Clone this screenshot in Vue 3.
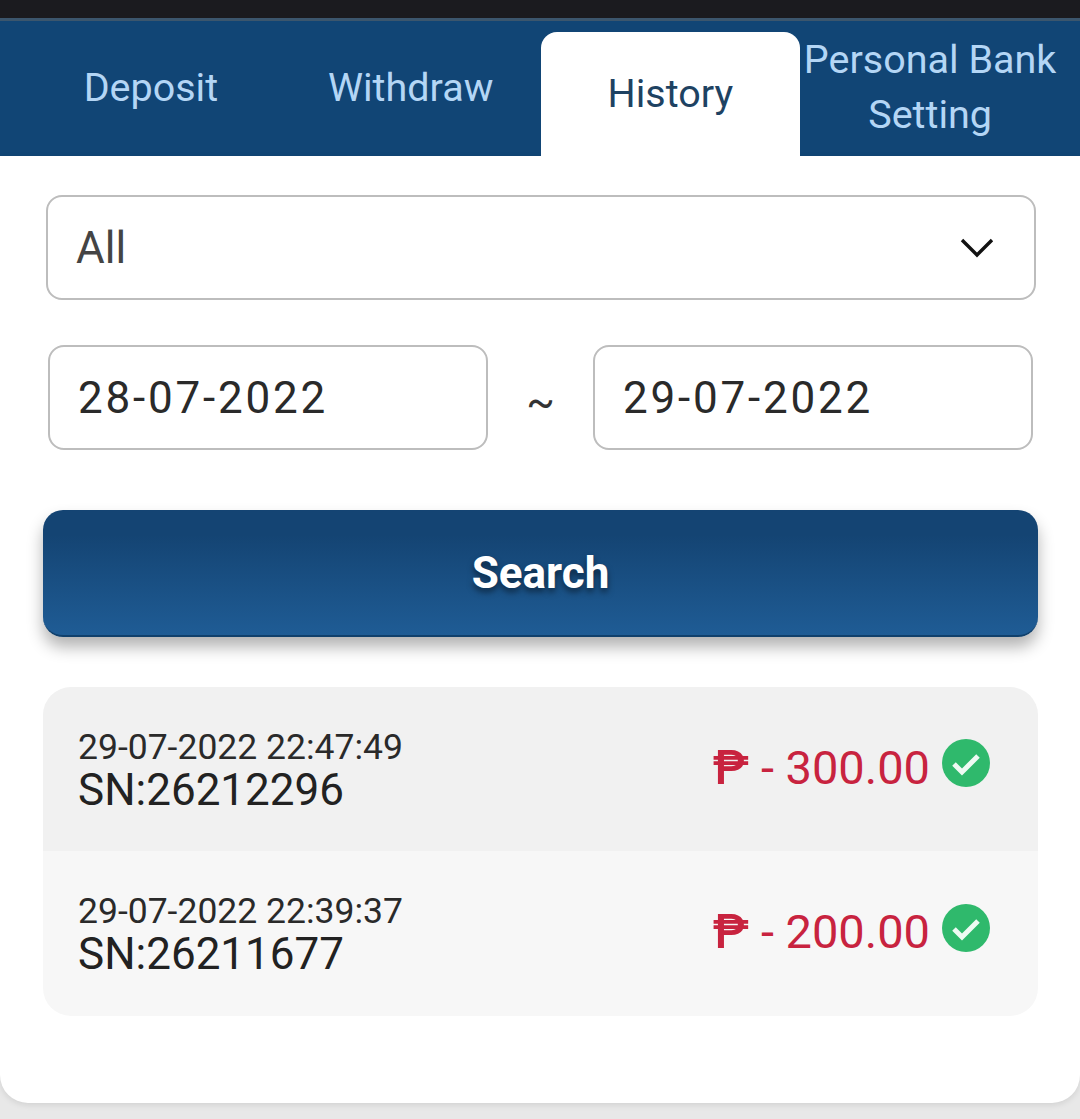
<template>
  <div class="page">
    <div class="status-bar"></div>
    <div class="tabs">
      <div v-for="tab in tabs" :key="tab" class="tab" :class="{ active: tab === activeTab }">
        {{ tab }}
      </div>
    </div>

    <div class="panel">
      <div class="select">
        <span>All</span>
        <svg class="chevron" width="36" height="24" viewBox="0 0 36 24">
          <path d="M3 4 L18 19 L33 4" fill="none" stroke="#111" stroke-width="3.4" />
        </svg>
      </div>

      <div class="dates">
        <div class="date-input">28-07-2022</div>
        <span class="tilde">~</span>
        <div class="date-input">29-07-2022</div>
      </div>

      <button class="search-btn">Search</button>

      <div class="records">
        <div v-for="item in records" :key="item.sn" class="record">
          <div class="record-info">
            <div class="record-time">{{ item.time }}</div>
            <div class="record-sn">SN:{{ item.sn }}</div>
          </div>
          <div class="record-amount">
            <span class="peso">₱</span>
            <span>- {{ item.amount }}</span>
            <svg class="check" width="48" height="48" viewBox="0 0 48 48">
              <circle cx="24" cy="24" r="24" fill="#2fb96c" />
              <path d="M12 25 L20 33 L36 17" fill="none" stroke="#eefaf3" stroke-width="5" />
            </svg>
          </div>
        </div>
      </div>
    </div>
  </div>
</template>

<script setup>
const tabs = ['Deposit', 'Withdraw', 'History', 'Personal Bank Setting']
const activeTab = 'History'

const records = [
  { time: '29-07-2022 22:47:49', sn: '26212296', amount: '300.00' },
  { time: '29-07-2022 22:39:37', sn: '26211677', amount: '200.00' }
]
</script>

<style>
html,
body {
  margin: 0;
  background: #e8e8e8;
}
</style>

<style scoped>
.page {
  width: 1080px;
  height: 1119px;
  overflow: hidden;
  font-family: Roboto, "Liberation Sans", sans-serif;
}

.status-bar {
  height: 18px;
  background: #1b1b1f;
  border-bottom: 3px solid #3c566d;
}

.tabs {
  display: grid;
  grid-template-columns: repeat(4, 1fr);
  height: 135px;
  padding: 0 20px 0 21px;
  background: #114575;
}

.tab {
  display: flex;
  align-items: center;
  justify-content: center;
  padding-bottom: 3px;
  text-align: center;
  font-size: 39.5px;
  line-height: 55px;
  color: #b4d6f5;
}

.tab.active {
  margin-top: 11px;
  padding-bottom: 2px;
  border-radius: 16px 16px 0 0;
  background: #fff;
  color: #1e4262;
}

.panel {
  height: 947px;
  box-sizing: border-box;
  padding: 39px 42px 0 43px;
  border-radius: 0 0 28px 28px;
  background: #fff;
  box-shadow: 0 2px 6px rgba(0, 0, 0, 0.1);
}

.select {
  display: flex;
  align-items: center;
  justify-content: space-between;
  box-sizing: border-box;
  height: 105px;
  margin: 0 2px 0 3px;
  padding: 0 39px 0 28px;
  border: 2px solid #bdbdbd;
  border-radius: 16px;
  font-size: 44px;
  color: #444;
}

.dates {
  display: flex;
  align-items: center;
  justify-content: space-between;
  margin: 45px 5px 0;
}

.date-input {
  box-sizing: border-box;
  width: 440px;
  height: 105px;
  padding: 0 28px;
  border: 2px solid #bdbdbd;
  border-radius: 16px;
  font-size: 44px;
  line-height: 103px;
  letter-spacing: 2.8px;
  color: #2a2a2a;
}

.tilde {
  font-size: 42px;
  color: #333;
  padding-top: 8px;
}

.search-btn {
  display: block;
  width: 100%;
  height: 127px;
  margin-top: 60px;
  border: 0;
  border-bottom: 2px solid #10406c;
  border-radius: 20px;
  background: linear-gradient(#144473, #144473 20%, #1f5c95);
  box-shadow: 0 10px 16px rgba(0, 0, 0, 0.3);
  font-family: inherit;
  font-size: 44px;
  font-weight: 700;
  color: #fff;
  text-shadow: 0 4px 6px rgba(0, 0, 0, 0.5);
}

.records {
  margin-top: 50px;
  border-radius: 28px;
  overflow: hidden;
}

.record {
  display: flex;
  align-items: center;
  justify-content: space-between;
  height: 164px;
  box-sizing: border-box;
  padding: 0 48px 0 35px;
  background: #f1f1f1;
}

.record:nth-child(even) {
  height: 165px;
  background: #f7f7f7;
}

.record-info {
  margin-top: 3px;
}

.record-time {
  font-size: 35.5px;
  line-height: 38px;
  color: #2a2a2a;
}

.record-sn {
  font-size: 44px;
  line-height: 48px;
  color: #222;
}

.record-amount {
  display: flex;
  align-items: center;
  gap: 12px;
  margin-top: -4px;
  font-size: 47px;
  color: #c8233f;
}

.peso {
  font-size: 49px;
  font-weight: 500;
}

.check {
  margin-bottom: 8px;
}
</style>
